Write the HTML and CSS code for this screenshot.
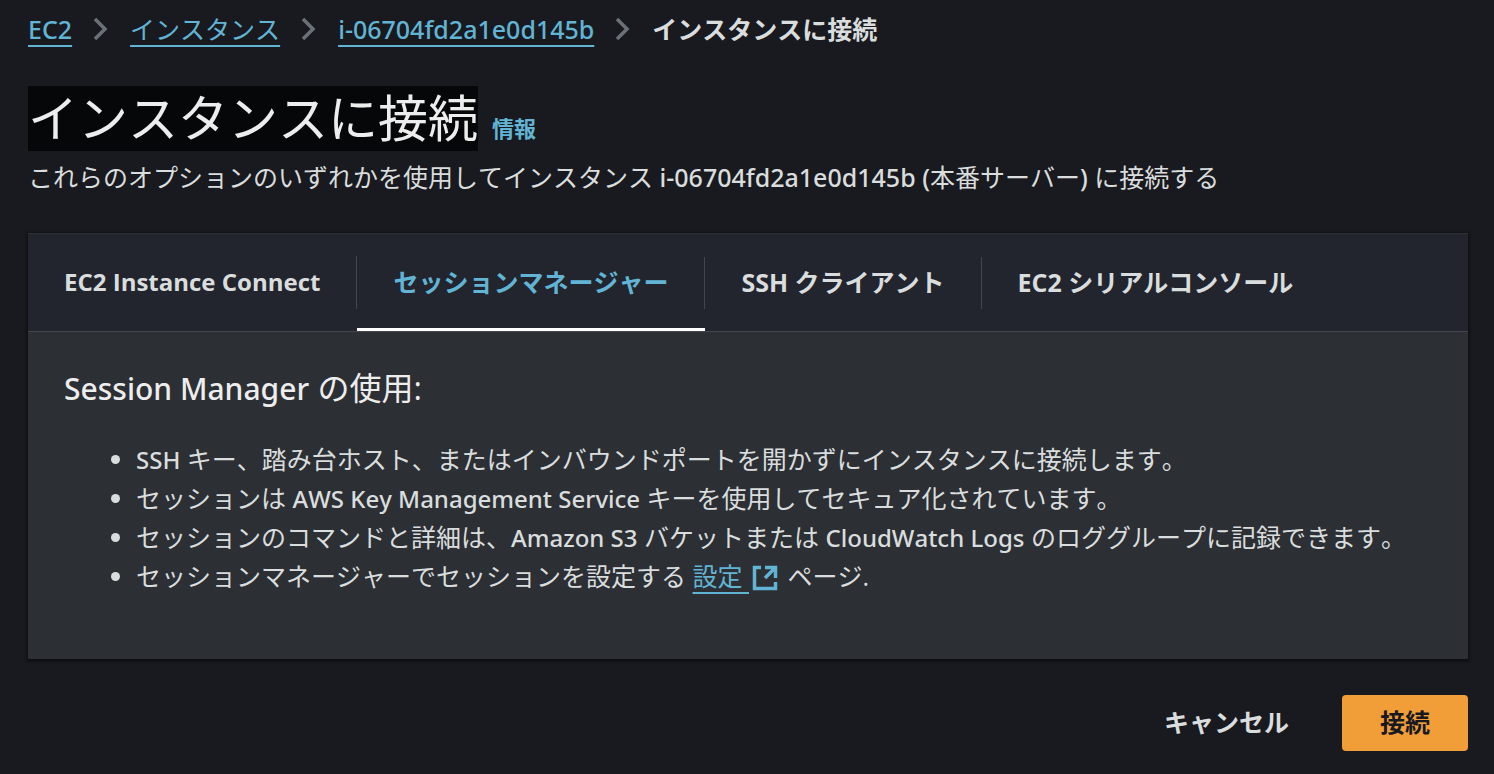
FILE: index.html
```html
<!DOCTYPE html>
<html lang="ja">
<head>
<meta charset="utf-8">
<meta name="viewport" content="width=device-width, initial-scale=1">
<title>インスタンスに接続</title>
<link rel="stylesheet" href="styles.css">
</head>
<body>
<div class="page">
  <nav class="breadcrumbs" aria-label="パンくずリスト">
    <ol class="crumb-list">
      <li class="crumb"><a class="link latin" href="#">EC2</a><svg class="chevron" viewBox="0 0 16 24" aria-hidden="true"><path d="M2 2l10 10L2 22"/></svg></li>
      <li class="crumb"><a class="link" href="#">インスタンス</a><svg class="chevron" viewBox="0 0 16 24" aria-hidden="true"><path d="M2 2l10 10L2 22"/></svg></li>
      <li class="crumb"><a class="link latin" href="#">i-06704fd2a1e0d145b</a><svg class="chevron" viewBox="0 0 16 24" aria-hidden="true"><path d="M2 2l10 10L2 22"/></svg></li>
      <li class="crumb current" aria-current="page">インスタンスに接続</li>
    </ol>
  </nav>
  <header class="header">
    <div class="title-row">
      <h1 class="title">インスタンスに接続</h1>
      <a class="info" href="#">情報</a>
    </div>
    <p class="description">これらのオプションのいずれかを使用してインスタンス <span class="latin">i-06704fd2a1e0d145b (</span>本番サーバー<span class="latin">) </span>に接続する</p>
  </header>
  <main class="panel">
    <div class="tabs" role="tablist">
      <button class="tab" role="tab" type="button" aria-selected="false"><span class="tab-label"><span class="tab-latin">EC2 Instance Connect</span></span></button>
      <button class="tab active" role="tab" type="button" aria-selected="true"><span class="tab-label">セッションマネージャー</span></button>
      <button class="tab" role="tab" type="button" aria-selected="false"><span class="tab-label">SSH クライアント</span></button>
      <button class="tab" role="tab" type="button" aria-selected="false"><span class="tab-label">EC2 シリアルコンソール</span></button>
    </div>
    <section class="content" role="tabpanel">
      <h2 class="subtitle"><span class="subtitle-latin">Session Manager</span> の使用:</h2>
      <ul class="list">
        <li><span class="latin">SSH</span> キー、踏み台ホスト、またはインバウンドポートを開かずにインスタンスに接続します。</li>
        <li>セッションは <span class="latin">AWS Key Management Service</span> キーを使用してセキュア化されています。</li>
        <li>セッションのコマンドと詳細は、<span class="latin">Amazon S3</span> バケットまたは <span class="latin">CloudWatch Logs</span> のロググループに記録できます。</li>
        <li>セッションマネージャーでセッションを設定する <a class="link" href="#">設定 </a><svg class="external" viewBox="0 0 26 26" aria-hidden="true"><path d="M9 2.500H2.500v21h21V17M13 2.500h10.500V13M23.500 2.500L13 13"/></svg> ページ.</li>
      </ul>
    </section>
  </main>
  <footer class="actions">
    <button class="button" type="button">キャンセル</button>
    <button class="button primary" type="button">接続</button>
  </footer>
</div>
</body>
</html>
```
FILE: styles.css
```css
* { box-sizing: border-box; }
body {
  margin: 0;
  background: #191a1f;
  color: #d9dddd;
  font-family: "Open Sans", "Noto Sans CJK JP", sans-serif;
  font-size: 25px;
  font-kerning: none;
  line-height: 40px;
}
.page { padding: 9px 26px 20px 28px; }
.crumb-list { display: flex; margin: 0; padding: 0; list-style: none; }
.crumb { display: flex; align-items: center; }
.current { font-weight: 700; }
.latin { font-family: "Noto Sans", "Noto Sans CJK JP", sans-serif; font-weight: 500; }
.link { color: #62b4d4; text-decoration: underline; text-decoration-thickness: 2px; text-underline-offset: 6px; }
.chevron { width: 16px; height: 24px; margin: 0 21px; fill: none; stroke: #6b7178; stroke-width: 3.5; }
.header { padding-top: 37px; }
.title-row { display: flex; align-items: baseline; gap: 14px; }
.title { margin: 0; background: #060709; color: #ededed; font-size: 50px; font-weight: 400; line-height: 65px; }
.info { color: #62b4d4; font-size: 22px; font-weight: 700; text-decoration: none; }
.description { margin: 6px 0 0; }
.panel { margin-top: 36px; background: #2c2f34; box-shadow: 0 1px 3px 1px #0c0d10; }
.tabs { display: flex; height: 99px; background: #22252d; border-top: 1px solid #2c2f34; border-bottom: 1px solid #43474d; }
.tab { padding: 22px 0 19px; border: 0; border-bottom: 3px solid transparent; background: none; color: inherit; font: inherit; font-weight: 700; font-kerning: none; }
.tab-label { display: block; padding: 5px 36px 7px; border-right: 1px solid #43474d; }
.tab-latin { font-size: 24px; }
.tab:last-child .tab-label { border-right: 0; }
.active { border-bottom-color: #fff; color: #62b4d4; }
.content { padding: 35px 36px 63px; }
.subtitle { margin: 0; color: #ededed; font-size: 32px; font-weight: 400; line-height: 42px; }
.subtitle-latin { font-family: "Noto Sans", "Noto Sans CJK JP", sans-serif; font-size: 30px; font-weight: 500; }
.list { margin: 30px 0 0; padding-left: 72px; line-height: 39px; }
.list .latin { font-size: 24px; }
.external { width: 26px; height: 26px; margin: 0 3px; vertical-align: -5px; fill: none; stroke: #62b4d4; stroke-width: 3.5; }
.actions { display: flex; justify-content: flex-end; gap: 15px; margin-top: 36px; }
.button { padding: 7px 38px 9px; border: 0; border-radius: 4px; background: none; color: inherit; font: inherit; font-weight: 700; font-kerning: none; }
.primary { background: #f19e38; color: #16191f; }
```
